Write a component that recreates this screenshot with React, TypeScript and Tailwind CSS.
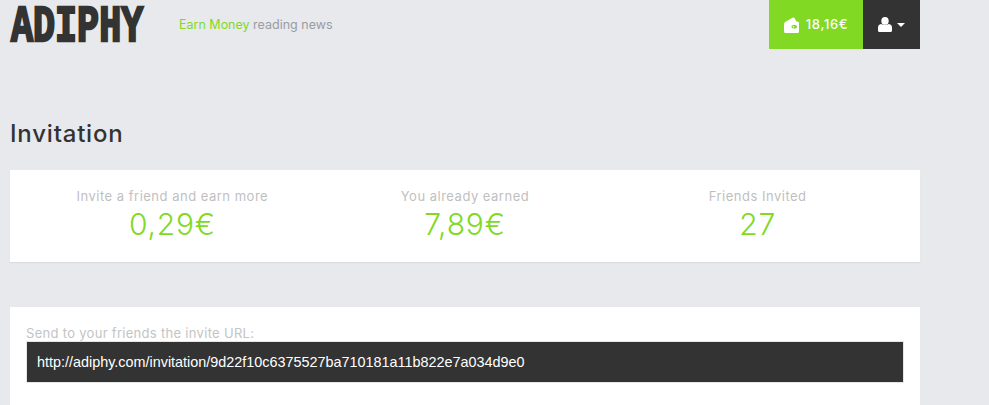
import React from 'react';

const stats = [
  { label: 'Invite a friend and earn more', value: '0,29€' },
  { label: 'You already earned', value: '7,89€' },
  { label: 'Friends Invited', value: '27' },
];

const WalletIcon = () => (
  <svg viewBox="0 0 15 16" className="h-[16px] w-[15px]">
    <path d="M0 7 Q0 5.5 1.5 4.8 L9 .6 Q10 .2 10.6 1.2 L12.4 4.4 L13.5 4.4 Q15 4.4 15 6 L15 14.5 Q15 16 13.5 16 L1.5 16 Q0 16 0 14.5 Z" fill="#fff" />
    <rect x="7.5" y="8" width="5.5" height="3.5" rx="1.7" fill="#82d924" />
    <circle cx="9.5" cy="9.7" r=".8" fill="#fff" />
  </svg>
);

const UserIcon = () => (
  <svg viewBox="0 0 14 15" className="h-[15px] w-[14px]" fill="#fff">
    <ellipse cx="7" cy="3.9" rx="3.7" ry="3.9" />
    <path d="M0 13.5 L0 10.5 Q0 7.6 3 7 Q7 9.2 11 7 Q14 7.6 14 10.5 L14 13.5 Q14 15 12.5 15 L1.5 15 Q0 15 0 13.5 Z" />
  </svg>
);

const App: React.FC = () => {
  return (
    <div className="h-[405px] overflow-hidden bg-[#e8e9ed] font-['Inter',sans-serif]">
      <div className="w-[920px]">
        {/* Top bar */}
        <header className="flex h-[49px] items-start">
          <div className="ml-[11px] h-[49px] w-[135px] pt-[3px]">
            <span className="block origin-top-left scale-x-[0.72] font-['Liberation_Mono',monospace] text-[51px] leading-[49px] font-bold whitespace-nowrap text-[#333] [-webkit-text-stroke:2.5px_#333]">
              ADIPHY
            </span>
          </div>
          <p className="mt-[17px] ml-[33px] text-[12.5px] leading-[16px] text-[#9a9ca3]">
            <span className="text-[#82d924]">Earn Money</span> reading news
          </p>
          <div className="ml-auto flex h-[49px]">
            <div className="flex w-[94px] items-center justify-center gap-[7px] bg-[#82d924] text-[13px] font-medium tracking-[0.7px] text-white">
              <WalletIcon />
              18,16€
            </div>
            <div className="flex w-[57px] items-center justify-center gap-[5px] bg-[#333]">
              <UserIcon />
              <span className="h-0 w-0 border-x-[4px] border-t-[4px] border-x-transparent border-t-white" />
            </div>
          </div>
        </header>

        <main className="pl-[10px]">
          <h1 className="mt-[70px] text-[24px] leading-[30px] font-medium tracking-[0.8px] text-[#333]">Invitation</h1>

          {/* Stats */}
          <section className="mt-[21px] grid h-[92px] grid-cols-3 bg-white px-[16px] pt-[18px] shadow-[0_1px_1px_rgba(0,0,0,0.06)]">
            {stats.map((stat) => (
              <div key={stat.label} className="text-center">
                <p className="text-[13px] leading-[16px] tracking-[0.5px] text-[#bfbfbf]">{stat.label}</p>
                <p className="mt-[1px] text-[30px] leading-[38px] font-light tracking-[0.8px] text-[#82d924]">{stat.value}</p>
              </div>
            ))}
          </section>

          {/* Invite URL */}
          <section className="mt-[45px] h-[98px] bg-white px-[16px] pt-[18px]">
            <label className="block text-[13px] leading-[16px] tracking-[0.3px] text-[#c4c4c4]">
              Send to your friends the invite URL:
            </label>
            <input
              readOnly
              value="http://adiphy.com/invitation/9d22f10c6375527ba710181a11b822e7a034d9e0"
              className="block h-[42px] w-full border border-[#e5e5e5] bg-[#333] px-[10px] font-['Liberation_Sans',sans-serif] text-[14.4px] text-white outline-none"
            />
          </section>
        </main>
      </div>
    </div>
  );
};

export default App;
